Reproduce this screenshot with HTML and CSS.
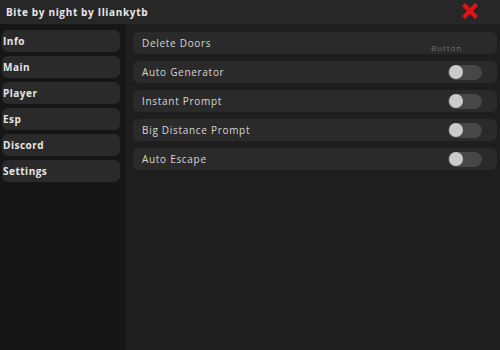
FILE: index.html
```html
<!DOCTYPE html>
<html>
<head>
<meta charset="utf-8">
<link rel="stylesheet" href="styles.css">
</head>
<body>
<div class="window">
  <header class="titlebar">
    <span class="title">Bite by night by Iliankytb</span>
    <svg class="close" width="18" height="18" viewBox="0 0 18 18">
      <path d="M2.5 2.5 L15.5 15.5 M15.5 2.5 L2.5 15.5" stroke="#e41414" stroke-width="4" stroke-linecap="butt"/>
    </svg>
  </header>
  <div class="body">
    <nav class="sidebar">
      <div class="tab">Info</div>
      <div class="tab">Main</div>
      <div class="tab">Player</div>
      <div class="tab">Esp</div>
      <div class="tab">Discord</div>
      <div class="tab">Settings</div>
    </nav>
    <main class="content">
      <div class="row">
        <span class="label">Delete Doors</span>
        <span class="btn-text">Button</span>
      </div>
      <div class="row">
        <span class="label">Auto Generator</span>
        <span class="toggle"><span class="knob"></span></span>
      </div>
      <div class="row">
        <span class="label">Instant Prompt</span>
        <span class="toggle"><span class="knob"></span></span>
      </div>
      <div class="row">
        <span class="label">Big Distance Prompt</span>
        <span class="toggle"><span class="knob"></span></span>
      </div>
      <div class="row">
        <span class="label">Auto Escape</span>
        <span class="toggle"><span class="knob"></span></span>
      </div>
    </main>
  </div>
</div>
</body>
</html>
```
FILE: styles.css
```css
html, body {
  margin: 0;
  padding: 0;
  background: #1c1c1c;
}
.window {
  width: 500px;
  height: 350px;
  display: flex;
  flex-direction: column;
  font-family: "Open Sans", "Liberation Sans", sans-serif;
}
.titlebar {
  height: 24px;
  background: #272727;
  display: flex;
  align-items: center;
  justify-content: space-between;
  padding: 0 21px 0 6px;
  flex: none;
}
.title {
  color: #e8e8e8;
  font-size: 10px;
  font-weight: 700;
  letter-spacing: 0.65px;
}
.close {
  display: block;
  margin-top: -2px;
}
.body {
  flex: 1;
  display: flex;
}
.sidebar {
  width: 125px;
  background: #161616;
  border-right: 2px solid #141414;
  display: flex;
  flex-direction: column;
  gap: 4px;
  padding: 6px 0 0 2px;
  box-sizing: border-box;
}
.tab {
  width: 118px;
  height: 22px;
  background: #2a2a2a;
  border-radius: 6px;
  color: #e6e6e6;
  font-size: 10px;
  font-weight: 700;
  letter-spacing: 0.5px;
  display: flex;
  align-items: center;
  padding-left: 1px;
  box-sizing: border-box;
}
.content {
  flex: 1;
  background: #1e1e1e;
  display: flex;
  flex-direction: column;
  gap: 7px;
  padding: 8px 3px 0 8px;
}
.row {
  height: 22px;
  background: #2a2a2a;
  border-radius: 6px;
  display: flex;
  align-items: center;
  justify-content: space-between;
  padding: 0 15px 0 9px;
}
.label {
  color: #d6d6d6;
  font-size: 10px;
  letter-spacing: 0.7px;
}
.btn-text {
  align-self: flex-end;
  color: #727272;
  font-size: 8px;
  letter-spacing: 0.9px;
  margin-right: 20px;
  margin-bottom: 1px;
}
.toggle {
  width: 34px;
  height: 15px;
  border-radius: 8px;
  background: #474747;
  display: flex;
  align-items: center;
  padding-left: 1px;
  box-sizing: border-box;
}
.knob {
  width: 14px;
  height: 14px;
  border-radius: 50%;
  background: #cbcbcb;
}
```
